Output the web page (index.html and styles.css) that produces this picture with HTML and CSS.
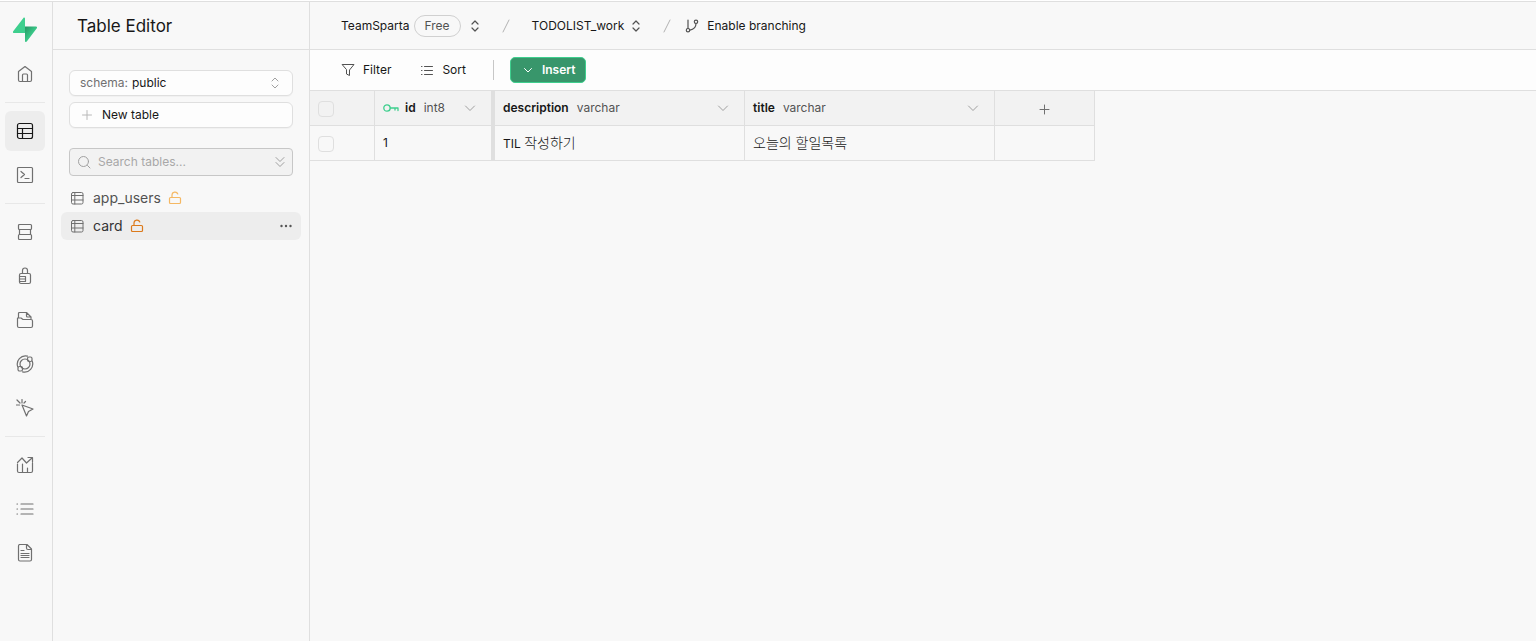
FILE: index.html
```html
<!DOCTYPE html>
<html lang="en">
<head>
<meta charset="utf-8">
<meta name="viewport" content="width=device-width, initial-scale=1">
<title>Table Editor</title>
<link rel="stylesheet" href="styles.css">
</head>
<body>
<svg class="defs" aria-hidden="true">
  <symbol id="sort-arrows" viewBox="0 0 14 14"><path d="M4 5l3-3 3 3M4 9l3 3 3-3"/></symbol>
  <symbol id="chevron" viewBox="0 0 12 12"><path d="M1.500 4l4.500 4.500L10.500 4"/></symbol>
  <symbol id="grid" viewBox="0 0 14 14"><rect x="1.500" y="1.500" width="11.500" height="11.500" rx="1.500"/><path d="M1.500 4.500h11.500M1.500 9h11.500M4.800 1.500v11.500"/></symbol>
  <symbol id="unlock" viewBox="0 0 14 14"><rect x="1.500" y="6.500" width="11" height="6" rx="1"/><path d="M4 6.500V4a3 3 0 0 1 5.800-1"/></symbol>
  <symbol id="list" viewBox="0 0 18 18"><path d="M5 4h12M5 9h12M5 14h12M1 4h.5M1 9h.5M1 14h.5"/></symbol>
</svg>
<div class="app">
  <nav class="rail" aria-label="Project">
    <a class="logo" href="#" aria-label="Home page">
      <svg width="24" height="26" viewBox="0 0 24 26">
        <defs><linearGradient id="shade" x1="0" y1="0" x2="1" y2="1"><stop offset="0" stop-color="#249361"/><stop offset=".6" stop-color="#3ecf8e"/></linearGradient></defs>
        <path fill="url(#shade)" d="M12 9.500h11c1 0 1.400 1 .8 1.800L13.800 24.600c-.6.800-1.800.4-1.800-.6z"/>
        <path fill="#3ecf8e" d="M12 1.500V16H1C0 16 -.4 15 .2 14.200L10.400.9C11 .1 12 .5 12 1.500z"/>
      </svg>
    </a>
    <a class="item" href="#" aria-label="Home"><svg class="ico" viewBox="0 0 18 18"><path d="M2.500 6.500L9 1.500l6.500 5V15q0 1.500-1.500 1.500H4Q2.500 16.500 2.500 15zM6.500 16.500V10q0-1 1-1h3q1 0 1 1v6.500"/></svg></a>
    <hr>
    <a class="item active" href="#" aria-label="Table Editor"><svg class="ico" viewBox="0 0 18 18"><rect x="1.500" y="1.500" width="15" height="15" rx="2"/><path d="M1.500 6.500h15M1.500 11.500h15M6.500 6.500v10"/></svg></a>
    <a class="item" href="#" aria-label="SQL Editor"><svg class="ico" viewBox="0 0 18 18"><rect x="1.500" y="1.500" width="15" height="15" rx="1"/><path d="M5 5.500l3.500 3L5 11.500M9 12.500h4"/></svg></a>
    <hr>
    <a class="item" href="#" aria-label="Database"><svg class="ico" viewBox="0 0 18 18"><rect x="2.500" y="1.500" width="13" height="5" rx="1"/><rect x="2.500" y="11.500" width="13" height="5" rx="1"/><path d="M3.500 6.500v5M14.500 6.500v5"/></svg></a>
    <a class="item" href="#" aria-label="Authentication"><svg class="ico" viewBox="0 0 18 18"><rect x="3.500" y="6.500" width="11" height="10" rx="1.500"/><path d="M6.500 6.500v-3a2.500 2.500 0 0 1 5 0v3M3.500 9.500h6v5h-6M3.500 12h6"/></svg></a>
    <a class="item" href="#" aria-label="Storage"><svg class="ico" viewBox="0 0 18 18"><path d="M2.500 7V2.500q0-1 1-1h7l4.500 4.500v1.500M10.500 1.500V5q0 1 1 1H15M1.500 7H5l2 1.500h8q1.500 0 1.500 1.500v5q0 1.500-1.500 1.500H3q-1.500 0-1.500-1.500z"/></svg></a>
    <a class="item" href="#" aria-label="Edge Functions"><svg class="ico" viewBox="0 0 18 18"><circle cx="9" cy="9" r="5"/><rect x="11.500" y="2" width="4.500" height="4.500" rx="1.500"/><rect x="2" y="11.500" width="4.500" height="4.500" rx="1.500"/><path d="M11.500 1.200A8.200 8.200 0 0 0 1.800 12M6.500 16.800A8.200 8.200 0 0 0 16.200 6"/></svg></a>
    <a class="item" href="#" aria-label="Realtime"><svg class="ico" viewBox="0 0 18 18"><path d="M6 6l11 4-4.500 2.500-2 4.500zM6 .5V4M0 6h3.500M1 1l3 3M8 4l1.500-1.500"/></svg></a>
    <hr>
    <a class="item" href="#" aria-label="Reports"><svg class="ico" viewBox="0 0 18 18"><path d="M1.500 8v7q0 1.500 1.500 1.500h12q1.500 0 1.500-1.500V7M6.500 8v8.500M11.500 12v4.500M1.500 6.500L6 2l4.500 5L16 2M12 1.500h4.500V6"/></svg></a>
    <a class="item" href="#" aria-label="Logs"><svg class="ico"><use href="#list"/></svg></a>
    <a class="item" href="#" aria-label="API Docs"><svg class="ico" viewBox="0 0 18 18"><path d="M11 .5H4Q2.500.5 2.500 2v13.500Q2.500 17 4 17h10q1.500 0 1.500-1.500V5zM10.500.5V4q0 1.500 1.500 1.500h3.500M5 6.500h3M5 9.500h8M5 11.500h8M5 13.500h8"/></svg></a>
  </nav>

  <aside class="panel">
    <header class="panel-head"><h1>Table Editor</h1></header>
    <div class="tools">
      <button class="field" type="button"><span class="muted">schema:</span><span>public</span><svg class="s14 end"><use href="#sort-arrows"/></svg></button>
      <button class="field new" type="button"><svg class="s14" viewBox="0 0 14 14"><path d="M7 2.500v9M2.500 7h9"/></svg><span>New table</span></button>
      <label class="search">
        <svg class="s14" viewBox="0 0 14 14"><circle cx="6.500" cy="6.500" r="5"/><path d="M10.500 10.500L13 13"/></svg>
        <input type="text" placeholder="Search tables..." aria-label="Search tables">
        <svg class="s14" viewBox="0 0 14 14"><path d="M3 2.500l4 4 4-4M3 7.500l4 4 4-4"/></svg>
      </label>
    </div>
    <ul class="tables">
      <li><a href="#"><svg class="s14"><use href="#grid"/></svg><span>app_users</span><svg class="s14 lock pale"><use href="#unlock"/></svg></a></li>
      <li class="current"><a href="#"><svg class="s14"><use href="#grid"/></svg><span>card</span><svg class="s14 lock"><use href="#unlock"/></svg></a><button class="more" type="button" aria-label="More options"><svg class="s14" viewBox="0 0 14 14"><g fill="#555" stroke="none"><circle cx="2.500" cy="7" r="1.200"/><circle cx="7" cy="7" r="1.200"/><circle cx="11.500" cy="7" r="1.200"/></g></svg></button></li>
    </ul>
  </aside>

  <main class="main">
    <header class="crumbs">
      <a href="#">TeamSparta</a><span class="badge">Free</span>
      <button class="plain" type="button" aria-label="Switch organization"><svg class="s14"><use href="#sort-arrows"/></svg></button>
      <svg class="slash" viewBox="0 0 16 16"><path d="M11 2L5 14"/></svg>
      <a href="#">TODOLIST_work</a>
      <button class="plain" type="button" aria-label="Switch project"><svg class="s14"><use href="#sort-arrows"/></svg></button>
      <svg class="slash" viewBox="0 0 16 16"><path d="M11 2L5 14"/></svg>
      <button class="plain branch" type="button"><svg class="s14" viewBox="0 0 14 14"><path d="M3 1v8.500M11 4.500q0 5.500-6.200 6.700"/><circle cx="3" cy="11.200" r="1.700"/><circle cx="11" cy="2.800" r="1.700"/></svg>Enable branching</button>
    </header>
    <div class="toolbar">
      <button class="plain" type="button"><svg class="s14" viewBox="0 0 14 14"><path d="M1.500 1.500h11.500L8.500 7v5.500l-3-1.500V7z"/></svg>Filter</button>
      <button class="plain sort" type="button"><svg class="s14" viewBox="0 0 14 14"><path d="M4.500 3.500h8M4.500 7.500h8M4.500 11.500h8M1.500 3.500h.5M1.500 7.500h.5M1.500 11.500h.5"/></svg>Sort</button>
      <span class="rule"></span>
      <button class="insert" type="button"><svg class="chev" viewBox="0 0 12 12"><path d="M2.500 4.500L6 8l3.500-3.500"/></svg>Insert</button>
    </div>
    <table class="data">
      <colgroup><col class="c-check"><col class="c-id"><col class="c-text"><col class="c-text"><col class="c-add"></colgroup>
      <thead>
        <tr>
          <th><input type="checkbox" aria-label="Select all rows"></th>
          <th class="frozen"><div class="cell"><svg class="key" viewBox="0 0 16 10"><circle cx="4" cy="5" r="3.200"/><path d="M7.200 5H15v2.500M12 5v2"/></svg><b>id</b><span>int8</span><svg class="chev"><use href="#chevron"/></svg></div></th>
          <th><div class="cell"><b>description</b><span>varchar</span><svg class="chev"><use href="#chevron"/></svg></div></th>
          <th><div class="cell"><b>title</b><span>varchar</span><svg class="chev"><use href="#chevron"/></svg></div></th>
          <th><button class="add" type="button" aria-label="Add column"><svg class="s14" viewBox="0 0 14 14"><path d="M6.500 2v9M2 6.500h9"/></svg></button></th>
        </tr>
      </thead>
      <tbody>
        <tr><td><input type="checkbox" aria-label="Select row 1"></td><td class="frozen">1</td><td>TIL <span class="ko" lang="ko">작성하기</span></td><td><span class="ko" lang="ko">오늘의 할일목록</span></td><td></td></tr>
      </tbody>
    </table>
  </main>
</div>
</body>
</html>
```

FILE: styles.css
```css
* { box-sizing: border-box; }
body {
  margin: 0;
  padding-top: 1px;
  background: #fff;
  color: #171717;
  font: 12px/16px Inter, "Noto Sans CJK KR", sans-serif;
}
.defs { position: absolute; width: 0; height: 0; }
svg { flex: none; display: block; fill: none; stroke: currentColor; stroke-linecap: round; stroke-linejoin: round; }
a { color: inherit; text-decoration: none; }
button { font: inherit; color: inherit; cursor: pointer; }
.s14 { width: 14px; height: 14px; }
.chev { width: 12px; height: 12px; }

.app {
  display: flex;
  min-height: calc(100vh - 1px);
  border-top: 1px solid #dfdfdf;
  background: #f8f8f8;
}

.rail {
  display: flex;
  flex-direction: column;
  gap: 4px;
  width: 53px;
  padding: 0 7px 0 5px;
  border-right: 1px solid #dfdfdf;
  color: #707070;
}
.logo { display: flex; justify-content: center; height: 48px; padding-top: 15px; }
.logo svg { stroke: none; }
.item {
  display: flex;
  align-items: center;
  justify-content: center;
  height: 40px;
  border-radius: 6px;
}
.item.active { background: #ededed; color: #171717; }
.ico { width: 18px; height: 18px; stroke-width: 1.2; }
.rail hr { width: 100%; height: 1px; margin: 4px 0; border: 0; background: #e8e8e8; }

.panel { width: 257px; border-right: 1px solid #dfdfdf; }
.panel-head {
  display: flex;
  align-items: center;
  height: 48px;
  padding: 0 24px;
  border-bottom: 1px solid #dfdfdf;
}
h1 { margin: 0; font-size: 17px; line-height: 24px; font-weight: 400; }
.tools { display: flex; flex-direction: column; gap: 6px; padding: 20px 16px 0; }
.field {
  display: flex;
  align-items: center;
  gap: 4px;
  height: 26px;
  padding: 0 10px;
  border: 1px solid #dfdfdf;
  border-radius: 6px;
  background: #fdfdfd;
  box-shadow: 0 1px 1px rgba(0, 0, 0, .03);
}
.muted { color: #707070; }
.field svg { color: #a0a0a0; }
.field .end { margin-left: auto; }
.field.new { gap: 8px; }
.field.new svg { color: #b8b8b8; }
.search {
  display: flex;
  align-items: center;
  gap: 7px;
  height: 28px;
  margin-top: 14px;
  padding: 0 5px 0 7px;
  border: 1px solid #c7c7c7;
  border-radius: 4px;
  background: #f2f2f2;
  color: #a0a0a0;
}
.search input {
  flex: 1;
  min-width: 0;
  padding: 0;
  border: 0;
  outline: 0;
  background: none;
  font: inherit;
  color: #171717;
}
.search input::placeholder { color: #a8a8a8; opacity: 1; }
.tables { margin: 8px 8px 0; padding: 0; list-style: none; font-size: 14px; color: #525252; }
.tables li { display: flex; align-items: center; height: 28px; padding: 0 8px; border-radius: 6px; }
.tables a { flex: 1; display: flex; align-items: center; gap: 9px; padding-left: 1px; }
.tables svg { color: #707070; }
.tables .lock { margin-left: -2px; color: #dc7a1c; stroke-width: 1.2; }
.tables .pale { color: #f5b863; }
.tables .current { background: #ededed; color: #343434; }
.more { padding: 0; border: 0; background: none; }

.main { flex: 1; min-width: 0; }
.plain { display: flex; align-items: center; gap: 8px; padding: 0; border: 0; background: none; }
.plain svg { color: #525252; }
.crumbs {
  display: flex;
  align-items: center;
  height: 48px;
  padding: 0 31px;
  border-bottom: 1px solid #dfdfdf;
}
.badge {
  margin: 0 7px 0 4px;
  padding: 2px 10px;
  border: 1px solid #d0d0d0;
  border-radius: 11px;
  color: #525252;
}
.crumbs .plain svg { stroke-width: 1.2; }
.slash { width: 16px; height: 16px; margin: 0 18px 0 16px; color: #b2b2b2; }
.crumbs a + .plain { margin-left: 5px; }
.crumbs .branch { margin-left: -8px; }
.toolbar {
  display: flex;
  align-items: center;
  height: 41px;
  padding: 0 31px;
  border-bottom: 1px solid #dfdfdf;
  background: #fdfdfd;
}
.sort { margin-left: 29px; }
.rule { width: 1px; height: 20px; margin: 0 16px 0 27px; background: #c7c7c7; }
.insert {
  display: flex;
  align-items: center;
  gap: 8px;
  height: 26px;
  padding: 0 9px 0 11px;
  border: 1px solid #3ecf8e;
  border-radius: 5px;
  background: #38966b;
  color: #fff;
  font-weight: 600;
}

.data { width: 785px; table-layout: fixed; border-spacing: 0; }
.c-check { width: 65px; }
.c-id { width: 120px; }
.c-text { width: 250px; }
.c-add { width: 100px; }
.data th, .data td {
  height: 35px;
  padding: 0 8px;
  border: solid #dfdfdf;
  border-width: 0 1px 1px 0;
  text-align: left;
  font-weight: 400;
}
.data th { background: #f2f2f2; }
.data .frozen { border-right-width: 4px; }
.ko { font-size: 14px; font-weight: 300; }
.cell { display: flex; align-items: center; gap: 8px; }
.cell b { font-weight: 600; }
.cell span { color: #525252; }
.cell .chev { margin: 0 7px 0 auto; color: #a0a0a0; }
.key { width: 16px; height: 10px; margin-right: -2px; color: #3ecf8e; stroke-width: 1.3; }
.data input {
  display: block;
  width: 16px;
  height: 16px;
  margin: 2px 0 0;
  appearance: none;
  border: 1px solid #dfdfdf;
  border-radius: 4px;
}
.add { display: block; margin: 4px auto 0; padding: 0; border: 0; background: none; color: #707070; }
```
